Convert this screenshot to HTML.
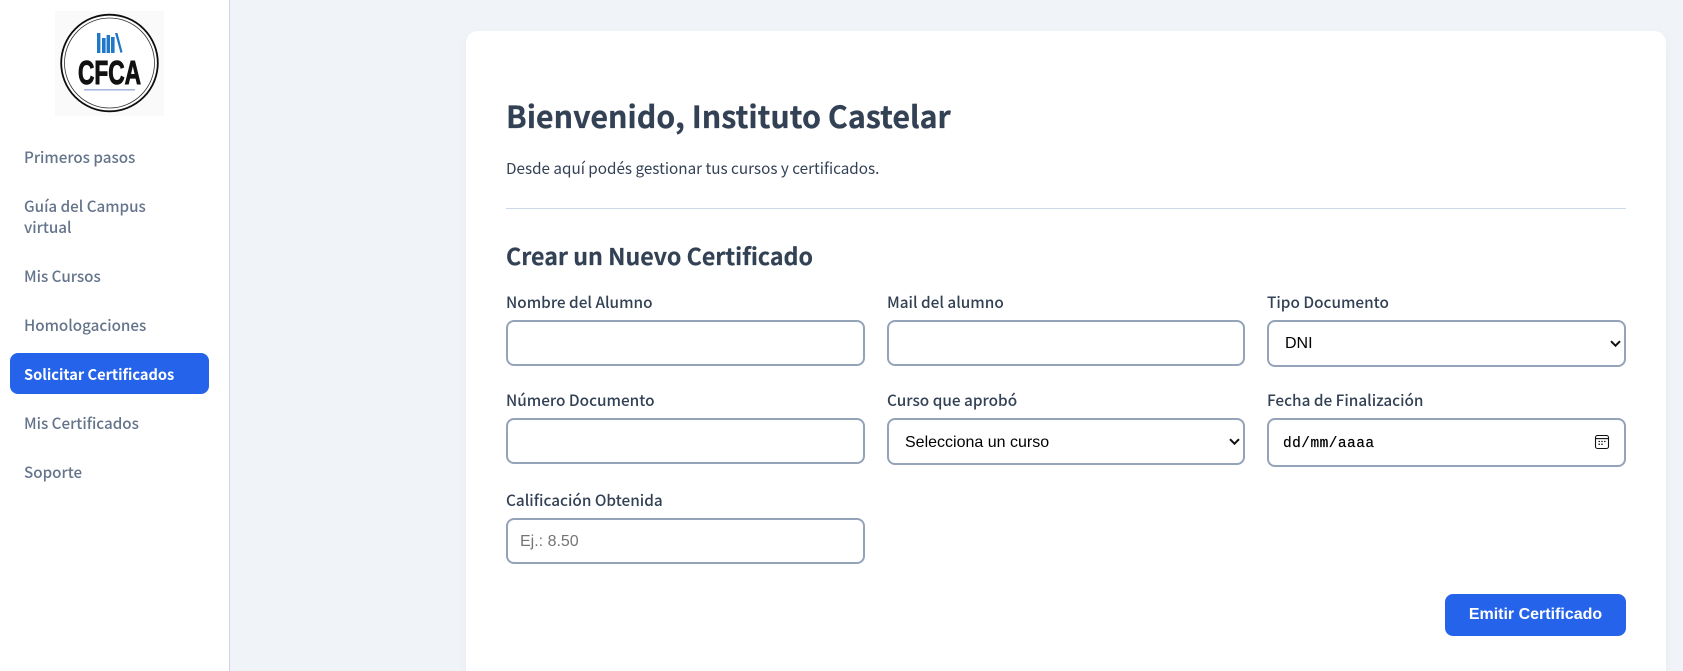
<!DOCTYPE html>
<html lang="es">
<head>
<meta charset="utf-8">
<title>Solicitar Certificados</title>
<style>
*{box-sizing:border-box}
html,body{margin:0;padding:0;width:1683px;height:671px;overflow:hidden;background:#f0f4f8}
body{position:relative;font-family:"Noto Sans CJK JP","Liberation Sans",sans-serif}
.sidebar{position:absolute;left:0;top:0;width:230px;height:671px;background:#fff;border-right:1px solid #cbd5e1}
.nav{position:absolute;left:24px;font-size:15.2px;line-height:21px;font-weight:500;color:#64748b;white-space:nowrap}
.active{position:absolute;left:10px;top:353px;width:199px;height:41px;background:#2563eb;border-radius:8px}
.card{position:absolute;left:466px;top:31px;width:1200px;height:640px;background:#fff;border-radius:12px 12px 0 0;box-shadow:0 4px 12px rgba(0,0,0,.04)}
.t{position:absolute;white-space:nowrap;color:#334155}
h1,h2,p{margin:0;font-weight:700}
p{font-weight:400}
label{position:absolute;white-space:nowrap;font-size:15.35px;line-height:21px;font-weight:500;color:#334155}
.f{position:absolute;border:2px solid #94a3b8;border-radius:8px;background:#fff;font-family:"Liberation Sans",Arial,sans-serif;font-size:16px;color:#000;outline:none;margin:0;-webkit-appearance:none;appearance:none}
input::placeholder{color:#757575;opacity:1}
.chev{position:absolute;width:11px;height:7px}
.btn{position:absolute;left:1445px;top:594px;width:181px;height:42px;border:0;border-radius:8px;background:#2563eb;color:#fff;font:700 16px/42px "Liberation Sans",Arial,sans-serif;text-align:center;padding:0}
</style>
</head>
<body>
<aside class="sidebar">
  <svg style="position:absolute;left:55px;top:11px;filter:blur(.35px)" width="109" height="105" viewBox="0 0 109 105">
    <rect width="109" height="105" fill="#fafafa"/>
    <circle cx="54.5" cy="52" r="48.3" fill="#fff" stroke="#0d0d0d" stroke-width="1.8"/>
    <circle cx="54.5" cy="52" r="45" fill="none" stroke="#333" stroke-width=".8"/>
    <g fill="#2078c8">
      <rect x="42" y="22" width="3.4" height="20"/>
      <rect x="47" y="27" width="3.6" height="15"/>
      <rect x="51.6" y="24" width="3.4" height="18"/>
      <rect x="56" y="26" width="3.6" height="16"/>
      <polygon points="60,22 62.5,22 67.5,41 65.5,42"/>
    </g>
    <text x="23" y="73" font-family="Liberation Sans,sans-serif" font-weight="700" font-size="33" textLength="63" lengthAdjust="spacingAndGlyphs" fill="#111" stroke="#111" stroke-width="1">CFCA</text>
    <rect x="29" y="78" width="51" height="1.6" fill="#6f8bc8" opacity=".6"/>
  </svg>
  <div class="nav" style="top:147px">Primeros pasos</div>
  <div class="nav" style="top:196px">Guía del Campus</div>
  <div class="nav" style="top:217px">virtual</div>
  <div class="nav" style="top:266px">Mis Cursos</div>
  <div class="nav" style="top:315px">Homologaciones</div>
  <div class="active"></div>
  <div class="nav" style="top:364px;color:#fff;font-weight:700;font-size:14.6px">Solicitar Certificados</div>
  <div class="nav" style="top:413px">Mis Certificados</div>
  <div class="nav" style="top:462px">Soporte</div>
</aside>

<div class="card"></div>

<h1 class="t" style="left:506px;top:93px;font-size:30.4px;line-height:44px;-webkit-text-stroke:.25px #334155">Bienvenido, Instituto Castelar</h1>
<p class="t" style="left:506px;top:157px;font-size:15.25px;line-height:22px">Desde aquí podés gestionar tus cursos y certificados.</p>
<div style="position:absolute;left:506px;top:208px;width:1120px;height:1px;background:#cbd8e8"></div>
<h2 class="t" style="left:506px;top:238px;font-size:23.2px;line-height:34px;-webkit-text-stroke:.2px #334155">Crear un Nuevo Certificado</h2>

<label style="left:506px;top:292px">Nombre del Alumno</label>
<input class="f" type="text" style="left:506px;top:320px;width:359px;height:46px">
<label style="left:887px;top:292px">Mail del alumno</label>
<input class="f" type="text" style="left:887px;top:320px;width:358px;height:46px">
<label style="left:1267px;top:292px">Tipo Documento</label>
<select class="f" style="left:1267px;top:320px;width:359px;height:47px;padding:0 0 0 16px"><option>DNI</option></select>
<svg class="chev" style="left:1610px;top:340px" viewBox="0 0 11 7"><path d="M1 1.2 5.5 5.7 10 1.2" fill="none" stroke="#111" stroke-width="2"/></svg>

<label style="left:506px;top:390px">Número Documento</label>
<input class="f" type="text" style="left:506px;top:418px;width:359px;height:46px">
<label style="left:887px;top:390px">Curso que aprobó</label>
<select class="f" style="left:887px;top:418px;width:358px;height:47px;padding:2px 0 0 16px"><option>Selecciona un curso</option></select>
<svg class="chev" style="left:1229px;top:438px" viewBox="0 0 11 7"><path d="M1 1.2 5.5 5.7 10 1.2" fill="none" stroke="#111" stroke-width="2"/></svg>
<label style="left:1267px;top:390px">Fecha de Finalización</label>
<input class="f" type="text" value="dd/mm/aaaa" style="left:1267px;top:418px;width:359px;height:49px;padding:3px 0 0 14px;font:14.5px 'Liberation Mono',monospace;letter-spacing:.45px;-webkit-text-stroke:.2px #000">
<svg style="position:absolute;left:1594px;top:434px" width="16" height="16" viewBox="0 0 16 16">
  <rect x="1.5" y="1.5" width="13" height="13" rx="2" fill="none" stroke="#111" stroke-width="1.1"/>
  <path d="M1.5 4.6h13" stroke="#111" stroke-width="1.1"/>
  <path d="M4.5 7.5h1.4M7.3 7.5h1.4M10.1 7.5h1.4M4.5 10.3h1.4M7.3 10.3h1.4" stroke="#111" stroke-width="1.3"/>
</svg>

<label style="left:506px;top:490px">Calificación Obtenida</label>
<input class="f" type="text" placeholder="Ej.: 8.50" style="left:506px;top:518px;width:359px;height:46px;padding:1px 0 0 12px">

<button class="btn">Emitir Certificado</button>
</body>
</html>
